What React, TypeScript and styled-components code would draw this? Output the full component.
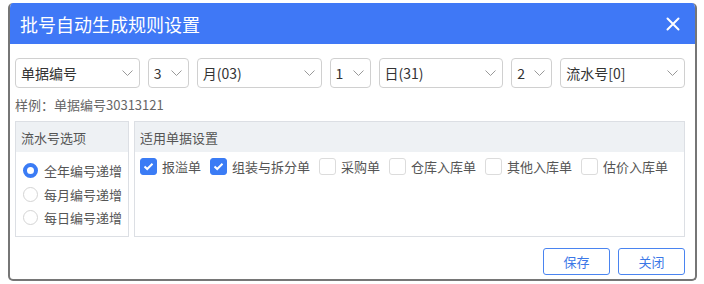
import styled, { createGlobalStyle } from "styled-components";

const GlobalStyle = createGlobalStyle`
  body {
    margin: 0;
    background: #fff;
    font-family: "Noto Sans CJK SC", "Noto Sans", sans-serif;
  }
`;

const Dialog = styled.div`
  box-sizing: border-box;
  width: 689px;
  height: 278px;
  margin: 3px 0 0 8px;
  background: #fff;
  border: 2px solid #767676;
  border-top: none;
  border-radius: 5px;
  overflow: hidden;
  display: flex;
  flex-direction: column;
`;

const Header = styled.div`
  height: 41px;
  background: #3f78f6;
  display: flex;
  align-items: center;
  justify-content: space-between;
  padding: 0 14px 0 10px;
  color: #fff;
  font-size: 18px;
`;

const CloseButton = styled.button`
  border: none;
  background: transparent;
  padding: 0;
  width: 16px;
  height: 16px;
  display: flex;
  align-items: center;
  justify-content: center;
  cursor: pointer;
`;

const Body = styled.div`
  flex: 1;
  padding: 14px 10px 0 5px;
  display: flex;
  flex-direction: column;
`;

const SelectRow = styled.div`
  display: flex;
  gap: 8px;
`;

const Select = styled.div<{ $wide?: boolean }>`
  box-sizing: border-box;
  width: ${(p) => (p.$wide ? "125px" : "41px")};
  height: 30px;
  border: 1px solid #d0d0d0;
  border-radius: 4px;
  display: flex;
  align-items: center;
  justify-content: space-between;
  padding: 0 6px 0 5px;
  font-size: 14px;
  color: #333;
`;

const Sample = styled.div`
  margin-top: 8px;
  height: 18px;
  line-height: 18px;
  font-size: 13px;
  color: #666;
`;

const Panels = styled.div`
  margin-top: 7px;
  display: flex;
  gap: 5px;
  height: 116px;
`;

const Panel = styled.div<{ $grow?: boolean }>`
  box-sizing: border-box;
  ${(p) => (p.$grow ? "flex: 1;" : "width: 114px;")}
  border: 1px solid #dcdfe4;
  display: flex;
  flex-direction: column;
`;

const PanelTitle = styled.div`
  height: 30px;
  background: #eef1f4;
  display: flex;
  align-items: center;
  padding-left: 5px;
  font-size: 13px;
  color: #555;
`;

const RadioList = styled.div`
  display: flex;
  flex-direction: column;
  padding: 7px 0 0 7px;
`;

const RadioItem = styled.label`
  height: 23.5px;
  display: flex;
  align-items: center;
  gap: 6px;
  font-size: 13px;
  color: #555;
`;

const RadioDot = styled.span<{ $on?: boolean }>`
  box-sizing: border-box;
  width: 15px;
  height: 15px;
  border-radius: 50%;
  border: ${(p) => (p.$on ? "4.5px solid #3b7cf5" : "1px solid #d4d4d4")};
  background: #fff;
`;

const CheckRow = styled.div`
  display: flex;
  align-items: center;
  gap: 9px;
  padding: 5px 0 0 5px;
`;

const CheckItem = styled.label`
  display: flex;
  align-items: center;
  gap: 5px;
  font-size: 13px;
  color: #555;
`;

const CheckBox = styled.span<{ $on?: boolean }>`
  box-sizing: border-box;
  width: 17px;
  height: 17px;
  border-radius: 3px;
  border: 1px solid ${(p) => (p.$on ? "#3b7cf5" : "#dcdcdc")};
  background: ${(p) => (p.$on ? "#3b7cf5" : "#fff")};
  display: flex;
  align-items: center;
  justify-content: center;
`;

const Footer = styled.div`
  margin-top: 11px;
  display: flex;
  justify-content: flex-end;
  gap: 8px;
`;

const Button = styled.button`
  box-sizing: border-box;
  width: 67px;
  height: 27px;
  border: 1px solid #4a84f0;
  border-radius: 3px;
  background: #fff;
  color: #3b78e7;
  font-family: inherit;
  font-size: 13px;
  cursor: pointer;
`;

const Chevron = () => (
  <svg width="11" height="6" viewBox="0 0 11 6">
    <path d="M0.5 0.5 L5.5 5.5 L10.5 0.5" fill="none" stroke="#999" strokeWidth="1" />
  </svg>
);

const selects = [
  { label: "单据编号", wide: true },
  { label: "3" },
  { label: "月(03)", wide: true },
  { label: "1" },
  { label: "日(31)", wide: true },
  { label: "2" },
  { label: "流水号[0]", wide: true },
];

const radios = [
  { label: "全年编号递增", on: true },
  { label: "每月编号递增" },
  { label: "每日编号递增" },
];

const docs = [
  { label: "报溢单", on: true },
  { label: "组装与拆分单", on: true },
  { label: "采购单" },
  { label: "仓库入库单" },
  { label: "其他入库单" },
  { label: "估价入库单" },
];

export default function App() {
  return (
    <>
      <GlobalStyle />
      <Dialog>
        <Header>
          <span>批号自动生成规则设置</span>
          <CloseButton>
            <svg width="14" height="14" viewBox="0 0 14 14">
              <path d="M1.5 1.5 L12.5 12.5 M12.5 1.5 L1.5 12.5" stroke="#fff" strokeWidth="2" strokeLinecap="round" />
            </svg>
          </CloseButton>
        </Header>
        <Body>
          <SelectRow>
            {selects.map((s, i) => (
              <Select key={i} $wide={s.wide}>
                <span>{s.label}</span>
                <Chevron />
              </Select>
            ))}
          </SelectRow>
          <Sample>样例：单据编号30313121</Sample>
          <Panels>
            <Panel>
              <PanelTitle>流水号选项</PanelTitle>
              <RadioList>
                {radios.map((r) => (
                  <RadioItem key={r.label}>
                    <RadioDot $on={r.on} />
                    {r.label}
                  </RadioItem>
                ))}
              </RadioList>
            </Panel>
            <Panel $grow>
              <PanelTitle>适用单据设置</PanelTitle>
              <CheckRow>
                {docs.map((d) => (
                  <CheckItem key={d.label}>
                    <CheckBox $on={d.on}>
                      {d.on && (
                        <svg width="11" height="9" viewBox="0 0 11 9">
                          <path d="M1.5 4.5 L4.2 7 L9.5 1.8" fill="none" stroke="#fff" strokeWidth="2" />
                        </svg>
                      )}
                    </CheckBox>
                    {d.label}
                  </CheckItem>
                ))}
              </CheckRow>
            </Panel>
          </Panels>
          <Footer>
            <Button>保存</Button>
            <Button>关闭</Button>
          </Footer>
        </Body>
      </Dialog>
    </>
  );
}
